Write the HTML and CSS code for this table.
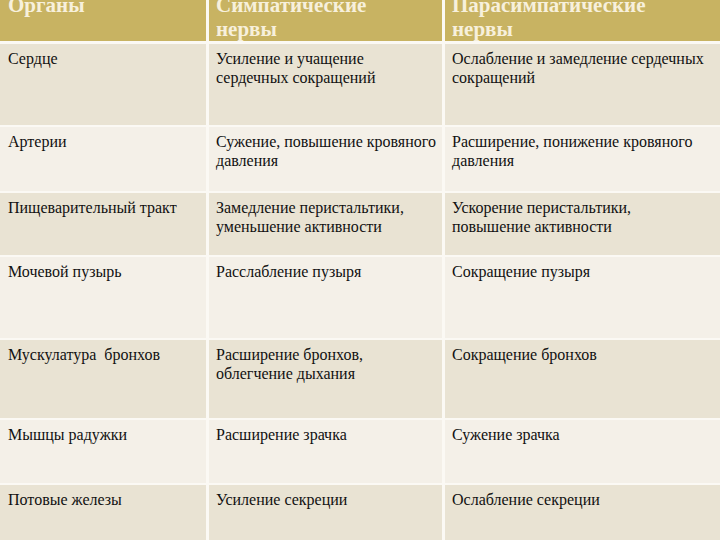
FILE: index.html
```html
<!DOCTYPE html>
<html lang="ru">
<head>
<meta charset="utf-8">
<link rel="stylesheet" href="styles.css">
</head>
<body>
<table class="nerves">
  <colgroup>
    <col class="c1"><col class="c2"><col class="c3">
  </colgroup>
  <thead>
    <tr class="head">
      <th>Органы</th>
      <th>Симпатические<br>нервы</th>
      <th>Парасимпатические<br>нервы</th>
    </tr>
  </thead>
  <tbody>
    <tr class="dark h83">
      <td>Сердце</td>
      <td>Усиление и учащение сердечных сокращений</td>
      <td>Ослабление и замедление сердечных сокращений</td>
    </tr>
    <tr class="light h66">
      <td>Артерии</td>
      <td>Сужение, повышение кровяного давления</td>
      <td>Расширение, понижение кровяного давления</td>
    </tr>
    <tr class="dark h64">
      <td>Пищеварительный тракт</td>
      <td>Замедление перистальтики, уменьшение активности</td>
      <td>Ускорение перистальтики, повышение активности</td>
    </tr>
    <tr class="light h83">
      <td>Мочевой пузырь</td>
      <td>Расслабление пузыря</td>
      <td>Сокращение пузыря</td>
    </tr>
    <tr class="dark h80">
      <td>Мускулатура&nbsp; бронхов</td>
      <td>Расширение бронхов, облегчение дыхания</td>
      <td>Сокращение бронхов</td>
    </tr>
    <tr class="light h65">
      <td>Мышцы радужки</td>
      <td>Расширение зрачка</td>
      <td>Сужение зрачка</td>
    </tr>
    <tr class="dark h70">
      <td>Потовые железы</td>
      <td>Усиление секреции</td>
      <td>Ослабление секреции</td>
    </tr>
  </tbody>
</table>
</body>
</html>
```
FILE: styles.css
```css
html, body {
  margin: 0;
  padding: 0;
  background: #ffffff;
  overflow: hidden;
}

.nerves {
  width: 720px;
  table-layout: fixed;
  border-collapse: separate;
  border-spacing: 0;
  margin-top: -7px;
  font-family: "Liberation Serif", "Times New Roman", serif;
  color: #111;
}

.c1 { width: 209px; }
.c2 { width: 236px; }
.c3 { width: 275px; }

.nerves th,
.nerves td {
  text-align: left;
  vertical-align: top;
  border-right: 3px solid #fbf9f4;
  border-bottom: 2px solid #fbf9f4;
  padding: 5px 2px 0 7px;
  box-sizing: border-box;
}

.nerves td:first-child,
.nerves th:first-child {
  padding-left: 8px;
}

.nerves th:last-child,
.nerves td:last-child {
  border-right: none;
  padding-right: 12px;
}

.head th {
  background: #c8b362;
  color: #f7f0dc;
  font-weight: bold;
  font-size: 21px;
  line-height: 24px;
  height: 51px;
  padding-top: 0;
  vertical-align: top;
  border-bottom-width: 3px;
}

.nerves td {
  font-size: 16px;
  line-height: 19px;
}

.dark td { background: #e9e3d3; }
.light td { background: #f4f0e8; }

.h83 td { height: 83px; }
.h80 td { height: 80px; }
.h66 td { height: 66px; }
.h65 td { height: 65px; }
.h64 td { height: 64px; }
.h70 td { height: 70px; }
```
